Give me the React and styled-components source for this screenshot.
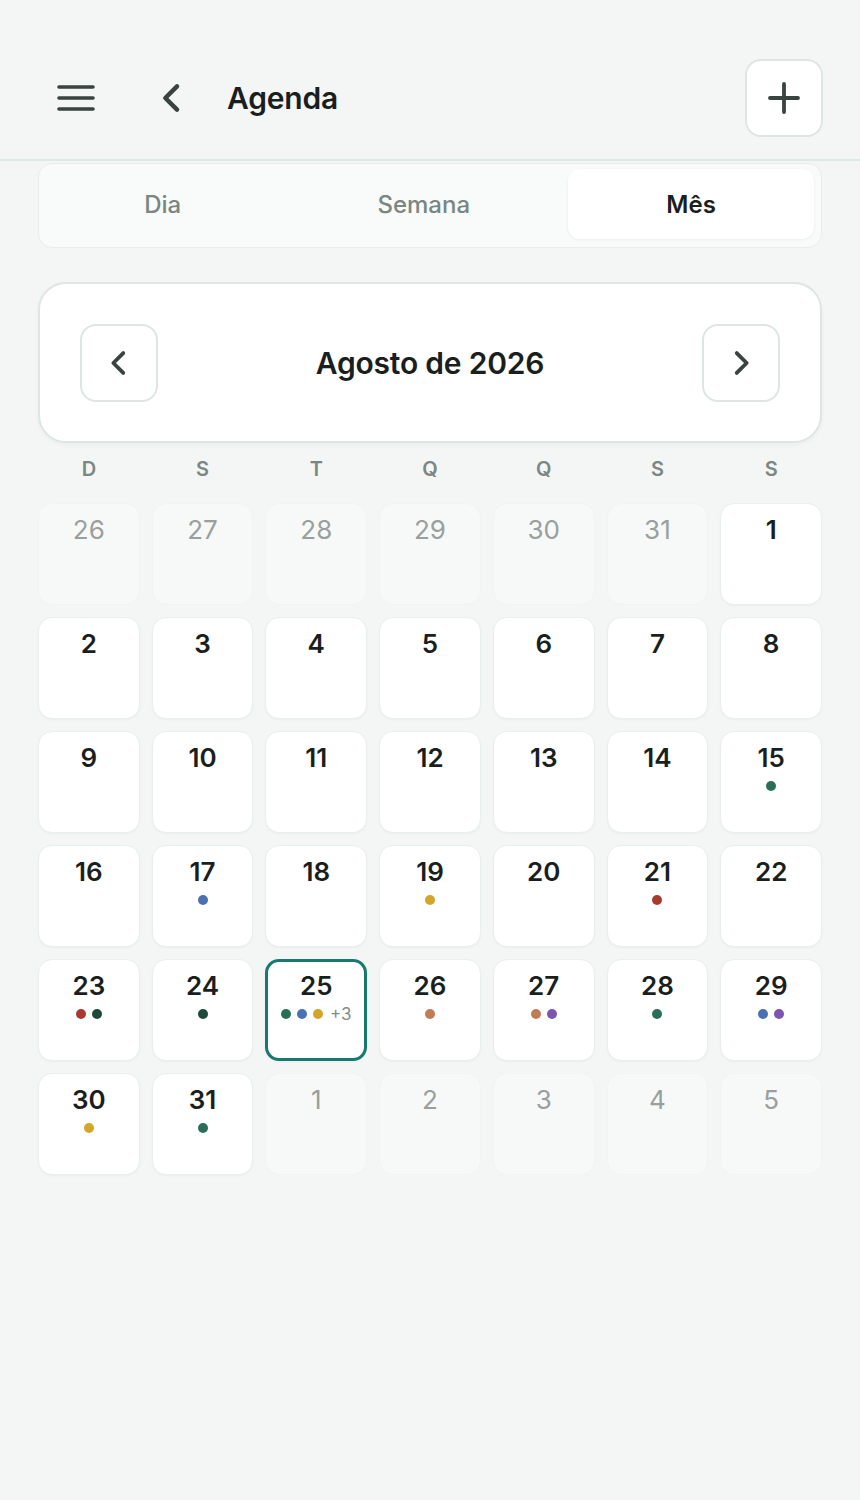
import React from "react";
import styled, { createGlobalStyle } from "styled-components";

const GlobalStyle = createGlobalStyle`
  html, body {
    margin: 0;
    padding: 0;
    background: #f3f6f5;
    font-family: Inter, "Noto Sans", "Liberation Sans", sans-serif;
    color: #1a1f1d;
  }
  * { box-sizing: border-box; }
`;

const Page = styled.div`
  width: 860px;
  min-height: 1500px;
  background: #f3f6f5;
`;

const Header = styled.header`
  display: flex;
  align-items: center;
  padding: 59px 37px 22px;
  border-bottom: 2px solid #e0e8e6;
`;

const IconButton = styled.button`
  width: 78px;
  height: 78px;
  display: flex;
  align-items: center;
  justify-content: center;
  padding: 0;
  cursor: pointer;
  color: #3a4340;
  background: ${p => (p.$boxed ? "#ffffff" : "transparent")};
  border: ${p => (p.$boxed ? "2px solid #dde6e4" : "none")};
  border-radius: 16px;
  margin-right: ${p => p.$gap || 0}px;
`;

const Title = styled.h1`
  flex: 1;
  margin: 0;
  font-size: 30px;
  font-weight: 600;
  letter-spacing: -0.2px;
  color: #1a1f1d;
`;

const Content = styled.main`
  padding: 2px 38px 0;
`;

const Tabs = styled.div`
  display: flex;
  padding: 5px 7px 8px;
  background: #f8fbfa;
  border: 1px solid #e8eeec;
  border-radius: 14px;
`;

const Tab = styled.button`
  flex: 1 1 auto;
  height: 70px;
  border: none;
  border-radius: 12px;
  font-family: inherit;
  font-size: 24px;
  font-weight: ${p => (p.$active ? 600 : 500)};
  color: ${p => (p.$active ? "#1a1f1d" : "#7b8581")};
  background: ${p => (p.$active ? "#ffffff" : "transparent")};
  box-shadow: ${p => (p.$active ? "0 1px 3px rgba(20,40,35,0.06)" : "none")};
  cursor: pointer;
`;

const MonthCard = styled.section`
  margin-top: 34px;
  height: 161px;
  display: flex;
  align-items: center;
  justify-content: space-between;
  padding: 0 40px;
  background: #ffffff;
  border: 2px solid #dde6e4;
  border-radius: 28px;
  box-shadow: 0 2px 4px rgba(20, 40, 35, 0.04);
`;

const MonthTitle = styled.h2`
  margin: 0;
  font-size: 30px;
  font-weight: 600;
  letter-spacing: -0.2px;
  color: #1a1f1d;
`;

const WeekRow = styled.div`
  display: grid;
  grid-template-columns: repeat(7, 1fr);
  column-gap: 12px;
  margin-top: 6px;
  height: 40px;
  align-items: center;
`;

const WeekLabel = styled.div`
  text-align: center;
  font-size: 20px;
  font-weight: 600;
  color: #7d8682;
`;

const Grid = styled.div`
  display: grid;
  grid-template-columns: repeat(7, 1fr);
  gap: 12px;
  margin-top: 14px;
`;

const Cell = styled.div`
  height: 102px;
  display: flex;
  flex-direction: column;
  align-items: center;
  padding-top: ${p => (p.$today ? 10 : 12)}px;
  border-radius: 14px;
  background: ${p => (p.$outside ? "#f6f9f8" : "#ffffff")};
  border: ${p =>
    p.$today ? "3px solid #17796f" : p.$outside ? "1px solid #f0f4f3" : "1px solid #e9efed"};
  box-shadow: ${p => (p.$outside ? "none" : "0 1px 2px rgba(20,40,35,0.04)")};
`;

const DayNum = styled.span`
  font-size: 26px;
  line-height: 28px;
  font-weight: ${p => (p.$outside ? 400 : 600)};
  color: ${p => (p.$outside ? "#9a9f9d" : "#1a1f1d")};
`;

const Dots = styled.div`
  display: flex;
  align-items: center;
  gap: 6px;
  margin-top: 8px;
  height: 12px;
`;

const Dot = styled.span`
  width: 10px;
  height: 10px;
  border-radius: 50%;
  background: ${p => p.$color};
`;

const More = styled.span`
  font-size: 17px;
  line-height: 12px;
  color: #858b89;
  margin-left: 1px;
`;

const C = {
  green: "#2a6e55",
  blue: "#4a72b0",
  yellow: "#d4a52a",
  red: "#a83a30",
  dark: "#1d4a3a",
  orange: "#c07c55",
  purple: "#7b55b0",
};

const events = {
  15: [C.green],
  17: [C.blue],
  19: [C.yellow],
  21: [C.red],
  23: [C.red, C.dark],
  24: [C.dark],
  25: [C.green, C.blue, C.yellow],
  26: [C.orange],
  27: [C.orange, C.purple],
  28: [C.green],
  29: [C.blue, C.purple],
  30: [C.yellow],
  31: [C.green],
};

const days = [
  ...[26, 27, 28, 29, 30, 31].map(d => ({ d, outside: true })),
  ...Array.from({ length: 31 }, (_, i) => ({ d: i + 1 })),
  ...[1, 2, 3, 4, 5].map(d => ({ d, outside: true })),
];

const Menu = () => (
  <svg width="40" height="30" viewBox="0 0 40 30" fill="none" stroke="currentColor" strokeWidth="3.6" strokeLinecap="round">
    <path d="M3 4h34M3 15h34M3 26h34" />
  </svg>
);

const Chevron = ({ dir = "left", size = 32 }) => (
  <svg width={size} height={size} viewBox="0 0 24 24" fill="none" stroke="currentColor" strokeWidth="2.7" strokeLinecap="round" strokeLinejoin="round">
    {dir === "left" ? <path d="M15 5l-7 7 7 7" /> : <path d="M9 5l7 7-7 7" />}
  </svg>
);

const Plus = () => (
  <svg width="34" height="34" viewBox="0 0 34 34" fill="none" stroke="currentColor" strokeWidth="3.8" strokeLinecap="round">
    <path d="M17 3v28M3 17h28" />
  </svg>
);

export default function App() {
  return (
    <Page>
      <GlobalStyle />
      <Header>
        <IconButton $gap={18}><Menu /></IconButton>
        <IconButton $gap={16}><Chevron size={40} /></IconButton>
        <Title>Agenda</Title>
        <IconButton $boxed><Plus /></IconButton>
      </Header>

      <Content>
        <Tabs>
          <Tab>Dia</Tab>
          <Tab>Semana</Tab>
          <Tab $active>Mês</Tab>
        </Tabs>

        <MonthCard>
          <IconButton $boxed><Chevron size={34} /></IconButton>
          <MonthTitle>Agosto de 2026</MonthTitle>
          <IconButton $boxed><Chevron dir="right" size={34} /></IconButton>
        </MonthCard>

        <WeekRow>
          {["D", "S", "T", "Q", "Q", "S", "S"].map((w, i) => (
            <WeekLabel key={i}>{w}</WeekLabel>
          ))}
        </WeekRow>

        <Grid>
          {days.map((day, i) => {
            const ev = day.outside ? null : events[day.d];
            const today = !day.outside && day.d === 25;
            return (
              <Cell key={i} $outside={day.outside} $today={today}>
                <DayNum $outside={day.outside}>{day.d}</DayNum>
                {ev && (
                  <Dots>
                    {ev.map((c, j) => <Dot key={j} $color={c} />)}
                    {today && <More>+3</More>}
                  </Dots>
                )}
              </Cell>
            );
          })}
        </Grid>
      </Content>
    </Page>
  );
}
